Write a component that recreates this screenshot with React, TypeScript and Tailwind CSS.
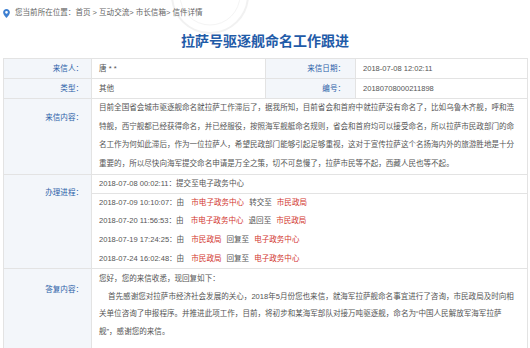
export default function App() {
  const font = "font-['Liberation_Sans','Noto_Sans_CJK_SC',sans-serif]";
  const label = "bg-[#f3f6fa] text-right pr-[8px] text-[#2b5ea8] border-r border-b border-[#e3e3e3]";
  const value = "pl-[7px] text-[#555] border-r border-b border-[#e3e3e3] whitespace-nowrap overflow-hidden";
  const red = "text-[#d2372f] mx-[5px]";
  return (
    <div className={`relative w-[530px] h-[348px] overflow-hidden bg-white text-[7.55px] ${font}`}>
      <svg className="absolute left-[150px] top-[-40px]" width="120" height="80" viewBox="0 0 120 80">
        <circle cx="60" cy="35" r="38" fill="none" stroke="#f1f1f1" strokeWidth="2" />
        <circle cx="60" cy="35" r="30" fill="none" stroke="#f4f4f4" strokeWidth="1" />
      </svg>
      <div className="relative h-[26px] flex items-center pl-[3px] text-[#666]">
        <svg width="7" height="9" viewBox="0 0 12 16" className="mr-[5px]">
          <path d="M6 0C2.7 0 0 2.6 0 5.9 0 10.3 6 16 6 16s6-5.7 6-10.1C12 2.6 9.3 0 6 0zm0 8.3a2.4 2.4 0 1 1 0-4.8 2.4 2.4 0 0 1 0 4.8z" fill="#3d7fd1" />
        </svg>
        <span>您当前所在位置：首页 &gt; 互动交流&gt; 市长信箱&gt; 信件详情</span>
      </div>
      <h1 className="relative h-[30px] mb-[2px] flex items-center justify-center text-[14px] font-bold text-[#1f5ba8]">
        拉萨号驱逐舰命名工作跟进
      </h1>
      <div className="relative ml-[3px] mr-[2px] grid grid-cols-[88px_174px_90px_1fr] border-l border-t border-[#e3e3e3]">
        <div className={`${label} h-[20px] leading-[19px]`}>来信人：</div>
        <div className={`${value} h-[20px] leading-[19px]`}>唐 * *</div>
        <div className={`${label} h-[20px] leading-[19px] pr-[10px]`}>来信日期：</div>
        <div className={`${value} h-[20px] leading-[19px] pl-[6px]`}>2018-07-08 12:02:11</div>

        <div className={`${label} h-[20px] leading-[19px]`}>类型：</div>
        <div className={`${value} h-[20px] leading-[19px]`}>其他</div>
        <div className={`${label} h-[20px] leading-[19px] pr-[10px]`}>编号：</div>
        <div className={`${value} h-[20px] leading-[19px] pl-[6px]`}>20180708000211898</div>

        <div className={`${label} pt-[10px] leading-[18.67px]`}>来信内容：</div>
        <div className={`${value} col-span-3 leading-[18.67px]`}>
          目前全国省会城市驱逐舰命名就拉萨工作滞后了，据我所知，目前省会和首府中就拉萨没有命名了，比如乌鲁木齐舰，呼和浩<br />
          特舰，西宁舰都已经获得命名，并已经服役，按照海军舰艇命名规则，省会和首府均可以接受命名，所以拉萨市民政部门的命<br />
          名工作为何如此滞后，作为一位拉萨人，希望民政部门能够引起足够重视，这对于宣传拉萨这个名扬海内外的旅游胜地是十分<br />
          重要的，所以尽快向海军提交命名申请是万全之策，切不可怠慢了，拉萨市民等不起，西藏人民也等不起。
        </div>

        <div className={`${label} pt-[9px] leading-[18.67px]`}>办理进程：</div>
        <div className="col-span-3 flex flex-col text-[#555] border-r border-b border-[#e3e3e3] whitespace-nowrap">
          <div className="h-[19px] leading-[18px] pl-[7px] border-b border-[#e3e3e3]">2018-07-08 00:02:11：提交至电子政务中心</div>
          <div className="pl-[7px] leading-[18.67px]">
            2018-07-09 10:10:07：由 <span className={red}>市电子政务中心</span>转交至<span className={red}>市民政局</span>
          </div>
          <div className="pl-[7px] leading-[18.67px]">
            2018-07-20 11:56:53：由 <span className={red}>市电子政务中心</span>退回至<span className={red}>市民政局</span>
          </div>
          <div className="pl-[7px] leading-[18.67px]">
            2018-07-19 17:24:25：由 <span className={red}>市民政局</span>回复至<span className={red}>电子政务中心</span>
          </div>
          <div className="pl-[7px] leading-[18.67px]">
            2018-07-24 16:02:48：由 <span className={red}>市民政局</span>回复至<span className={red}>电子政务中心</span>
          </div>
        </div>

        <div className={`${label} pt-[12px] leading-[17.4px]`}>答复内容：</div>
        <div className={`${value} col-span-3 pt-[1px] pb-[12px] leading-[17.4px]`}>
          <p>您好，您的来信收悉，现回复如下：</p>
          <p className="indent-[9px]">
            首先感谢您对拉萨市经济社会发展的关心，2018年5月份您也来信，就海军拉萨舰命名事宜进行了咨询，市民政局及时向相<br />
            关单位咨询了申报程序。并推进此项工作，目前，将初步和某海军部队对接万吨驱逐舰，命名为“中国人民解放军海军拉萨<br />
            舰”，感谢您的来信。
          </p>
        </div>
      </div>
    </div>
  );
}
